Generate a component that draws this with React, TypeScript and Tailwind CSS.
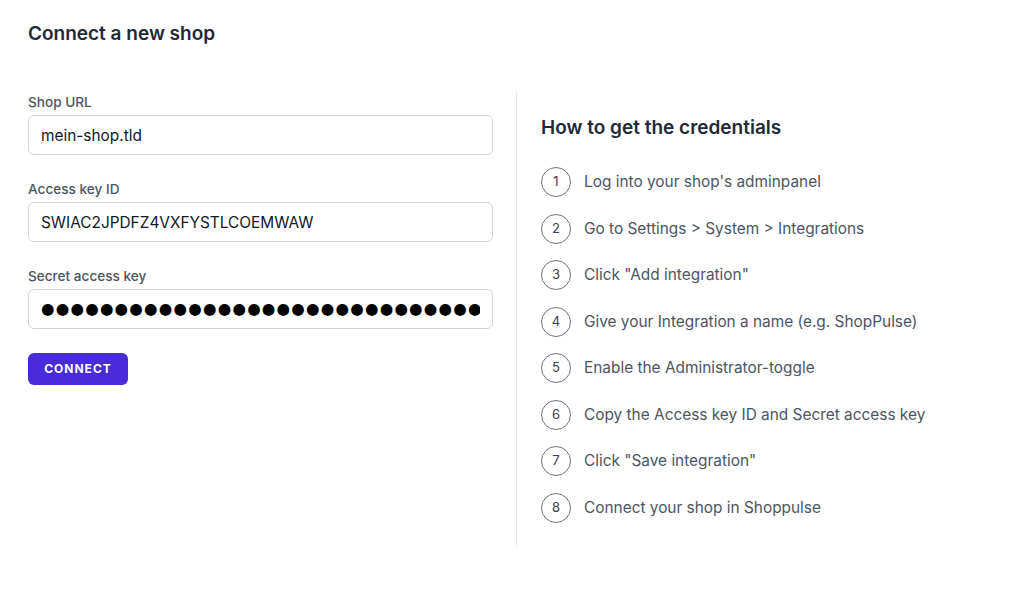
import React from 'react'

const steps = [
  "Log into your shop's adminpanel",
  'Go to Settings > System > Integrations',
  'Click "Add integration"',
  'Give your Integration a name (e.g. ShopPulse)',
  'Enable the Administrator-toggle',
  'Copy the Access key ID and Secret access key',
  'Click "Save integration"',
  'Connect your shop in Shoppulse',
]

function Field({ label, value, secret }: { label: string; value: string; secret?: boolean }) {
  return (
    <div className="flex flex-col">
      <label className="text-[13.6px] leading-5 font-medium text-[#4b5563] mb-[3px]">{label}</label>
      <input
        type="text"
        readOnly={secret}
        defaultValue={secret ? '●'.repeat(30) : value}
        className={`h-10 w-full rounded-md border border-[#d1d5db] bg-white px-3 text-[#111827] outline-none ${
          secret ? "text-[15.5px] tracking-[1.2px] font-['DejaVu_Sans',sans-serif] text-black" : 'text-[15.4px]'
        }`}
      />
    </div>
  )
}

export default function App() {
  return (
    <div className="min-h-[602px] bg-white pl-7 pt-[21px] font-['Inter','Liberation_Sans',sans-serif]">
      <h1 className="text-[19px] leading-[26px] font-semibold text-[#1f2937]">Connect a new shop</h1>

      <div className="mt-[45px] flex">
        {/* Form */}
        <div className="w-[465px] flex flex-col gap-6">
          <Field label="Shop URL" value="mein-shop.tld" />
          <Field label="Access key ID" value="SWIAC2JPDFZ4VXFYSTLCOEMWAW" />
          <Field label="Secret access key" value="" secret />
          <div>
            <button className="h-8 w-[100px] rounded-md bg-[#4a2bd9] text-[12px] font-bold tracking-[1px] text-white">
              CONNECT
            </button>
          </div>
        </div>

        {/* Divider */}
        <div className="ml-[23px] w-px bg-[#e5e7eb]" />

        {/* Instructions */}
        <div className="pl-6 pt-[23px] pb-6">
          <h2 className="text-[19px] leading-[26px] font-semibold text-[#1f2937] mb-[26px]">
            How to get the credentials
          </h2>
          <ol className="flex flex-col gap-[16.5px]">
            {steps.map((s, i) => (
              <li key={i} className="flex items-center h-[30px]">
                <span className="flex h-[30px] w-[30px] shrink-0 items-center justify-center rounded-full border border-[#6b7280] text-[13px] text-[#374151]">
                  {i + 1}
                </span>
                <span className="ml-[13px] text-[15.4px] text-[#4b5563]">{s}</span>
              </li>
            ))}
          </ol>
        </div>
      </div>
    </div>
  )
}
